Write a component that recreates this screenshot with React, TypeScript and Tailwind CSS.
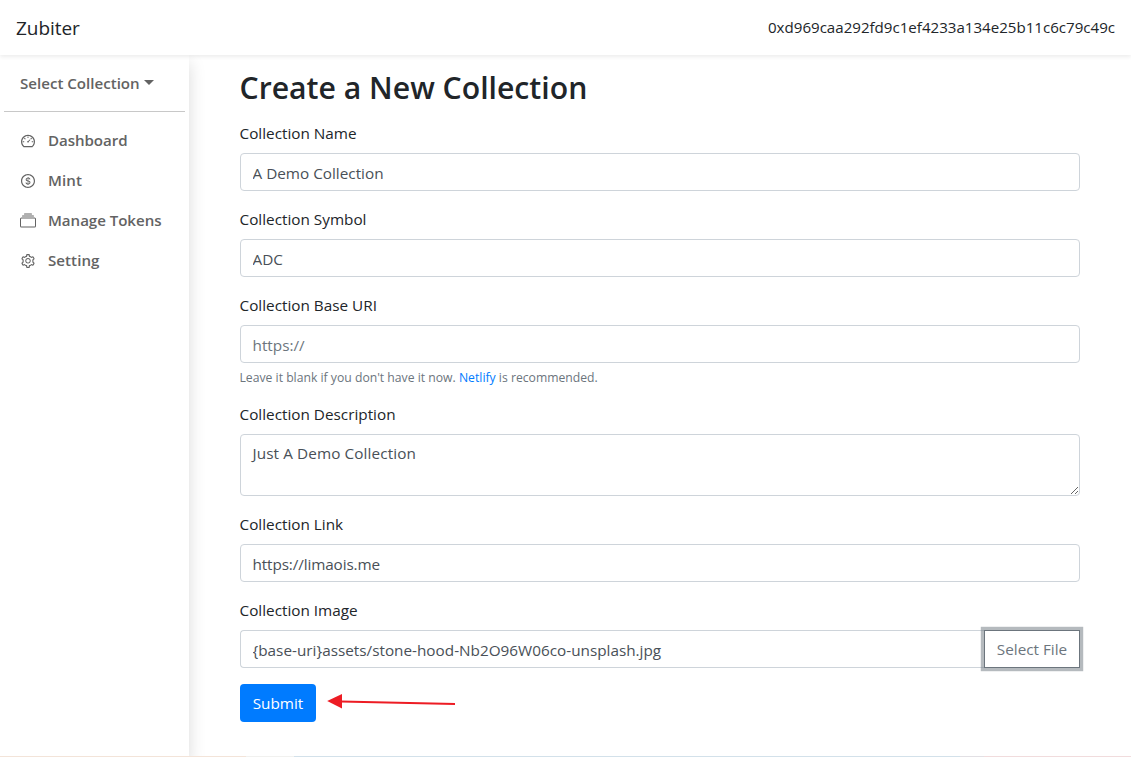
import type { ReactNode } from "react";
import { AiOutlineDashboard, AiOutlineDollar, AiOutlineSetting } from "react-icons/ai";
import { BsCollection } from "react-icons/bs";

const inputClass =
  "block h-[38px] w-full rounded-[4px] border border-[#ced4da] bg-white px-[11.5px] pt-[7px] pb-[5px] leading-6 text-[#495057] outline-none placeholder:text-[#6c757d]";

const navItems = [
  { label: "Dashboard", icon: <AiOutlineDashboard />, tracking: "tracking-[-0.06px]" },
  { label: "Mint", icon: <AiOutlineDollar />, tracking: "tracking-[0.1px]" },
  { label: "Manage Tokens", icon: <BsCollection />, tracking: "tracking-[-0.04px]" },
  { label: "Setting", icon: <AiOutlineSetting />, tracking: "tracking-[0.05px]" },
];

function Field({ id, label, children }: { id: string; label: string; children: ReactNode }) {
  return (
    <div className="mb-4">
      <label htmlFor={id} className="-ml-[0.5px] mb-2 block leading-6">
        {label}
      </label>
      {children}
    </div>
  );
}

function Header() {
  return (
    <header className="relative z-10 flex h-[55px] shrink-0 items-center justify-between bg-white px-4 shadow-[0_2px_4px_rgba(0,0,0,0.075)]">
      <a href="#" className="text-[19px] leading-[30px] tracking-[-0.05px]">
        Zubiter
      </a>
      <span className="pb-0.5 text-[15.1px] leading-6">0xd969caa292fd9c1ef4233a134e25b11c6c79c49c</span>
    </header>
  );
}

function Sidebar() {
  return (
    <aside className="w-[189px] shrink-0 bg-white px-1 text-[15.1px] font-semibold text-[#636363] shadow-[0_8px_16px_rgba(0,0,0,0.15)]">
      <button className="mt-4 flex h-6 items-center pl-4 leading-6">
        <span>Select Collection</span>
        <span className="mb-[2px] ml-1 border-x-[5px] border-t-[5px] border-x-transparent border-t-[#636363]" />
      </button>
      <hr className="mt-4 border-[#c8c8c8]" />
      <nav className="mt-2">
        {navItems.map((item) => (
          <a key={item.label} href="#" className="flex h-10 items-center gap-3 pl-4 leading-6">
            <span className="pt-px text-base">{item.icon}</span>
            <span className={item.tracking}>{item.label}</span>
          </a>
        ))}
      </nav>
    </aside>
  );
}

export default function App() {
  return (
    <div className="flex h-[757px] w-[1131px] flex-col overflow-hidden bg-white font-['Open_Sans','Noto_Sans',sans-serif] text-[15.3px] text-[#212529]">
      <Header />
      <div className="flex h-[701px] overflow-hidden">
        <Sidebar />
        <main className="flex-1 px-[51px] pt-[13px]">
          <h2 className="-ml-[0.5px] mb-3.5 text-[30.2px] leading-[39px] font-semibold">Create a New Collection</h2>
          <form>
            <Field id="name" label="Collection Name">
              <input id="name" className={inputClass} defaultValue="A Demo Collection" />
            </Field>
            <Field id="symbol" label="Collection Symbol">
              <input id="symbol" className={inputClass} defaultValue="ADC" />
            </Field>
            <Field id="uri" label="Collection Base URI">
              <input id="uri" className={inputClass} placeholder="https://" />
              <small className="mt-[5px] -mr-1 -mb-px -ml-[0.5px] block text-[12.2px] leading-[19px] text-[#6c757d]">
                Leave it blank if you don't have it now.{" "}
                <a href="#" className="text-[#007bff]">
                  Netlify
                </a>{" "}
                is recommended.
              </small>
            </Field>
            <Field id="description" label="Collection Description">
              <textarea
                id="description"
                className="block h-[62px] w-full resize-y rounded-[4px] border border-[#ced4da] px-[11.5px] py-1.5 leading-6 tracking-[0.1px] text-[#495057] outline-none"
                defaultValue="Just A Demo Collection"
              />
            </Field>
            <Field id="link" label="Collection Link">
              <input id="link" className={`${inputClass} tracking-[-0.12px]`} defaultValue="https://limaois.me" />
            </Field>
            <Field id="image" label="Collection Image">
              <div className="flex">
                <input
                  id="image"
                  className="h-[38px] min-w-0 flex-1 rounded-l-[4px] border border-r-0 border-[#ced4da] px-[11.5px] pt-[7px] pb-[5px] leading-6 text-[#495057] outline-none"
                  defaultValue="{base-uri}assets/stone-hood-Nb2O96W06co-unsplash.jpg"
                />
                <button
                  type="button"
                  className="h-[38px] w-24 border border-[#6c757d] bg-white leading-6 whitespace-nowrap text-[#6c757d] shadow-[0_0_0_3.2px_rgba(108,117,125,0.5)]"
                >
                  Select File
                </button>
              </div>
            </Field>
            <div className="flex items-start gap-2.5">
              <button type="button" className="h-[38px] w-[76px] rounded-[4px] bg-[#007bff] leading-6 text-white">
                Submit
              </button>
              <svg width="132" height="38" viewBox="0 0 132 38" aria-hidden="true">
                <path d="M15 17.4L129 20" stroke="#ed1c24" strokeWidth="2" />
                <path d="M1.2 17L16 10V24.6Z" fill="#ed1c24" />
              </svg>
            </div>
          </form>
        </main>
      </div>
      <div className="flex h-px shrink-0">
        <span className="w-[246px] bg-[#f3e4d9]" />
        <span className="w-12 bg-[#f1f1ef]" />
        <span className="w-[666px] bg-[#d3e1ea]" />
        <span className="w-6 bg-[#e2e0e4]" />
        <span className="flex-1 bg-[#f1dcdd]" />
      </div>
    </div>
  );
}
